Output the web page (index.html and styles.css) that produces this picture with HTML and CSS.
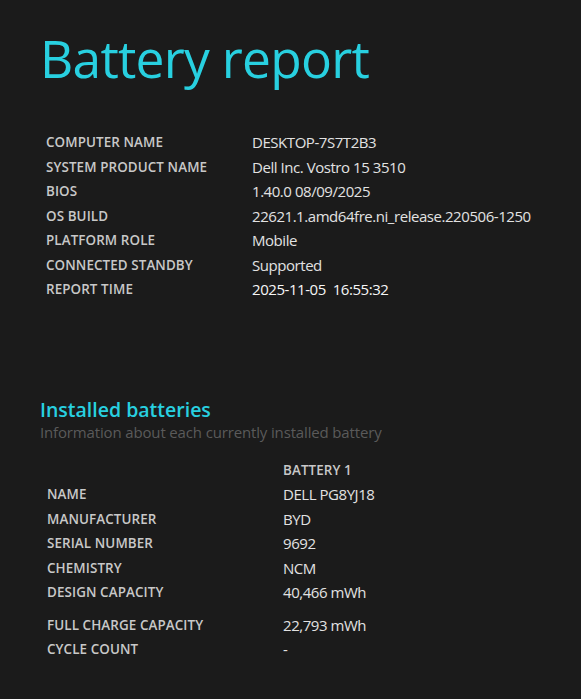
FILE: index.html
```html
<!DOCTYPE html>
<html>
<head>
<meta charset="utf-8">
<link rel="stylesheet" href="styles.css">
</head>
<body>
<div class="page">
  <h1 class="title">Battery report</h1>
  <table class="info">
    <tr><td class="label">COMPUTER NAME</td><td class="value">DESKTOP-7S7T2B3</td></tr>
    <tr><td class="label">SYSTEM PRODUCT NAME</td><td class="value">Dell Inc. Vostro 15 3510</td></tr>
    <tr><td class="label">BIOS</td><td class="value">1.40.0 08/09/2025</td></tr>
    <tr><td class="label">OS BUILD</td><td class="value">22621.1.amd64fre.ni_release.220506-1250</td></tr>
    <tr><td class="label">PLATFORM ROLE</td><td class="value">Mobile</td></tr>
    <tr><td class="label">CONNECTED STANDBY</td><td class="value">Supported</td></tr>
    <tr><td class="label">REPORT TIME</td><td class="value strong">2025-11-05&nbsp;&nbsp;16:55:32</td></tr>
  </table>

  <h2 class="section">Installed batteries</h2>
  <div class="subtitle">Information about each currently installed battery</div>

  <table class="batt">
    <tr class="head"><td class="blabel"></td><td class="label">BATTERY 1</td></tr>
    <tr><td class="label">NAME</td><td class="value">DELL PG8YJ18</td></tr>
    <tr><td class="label">MANUFACTURER</td><td class="value">BYD</td></tr>
    <tr><td class="label">SERIAL NUMBER</td><td class="value">9692</td></tr>
    <tr><td class="label">CHEMISTRY</td><td class="value">NCM</td></tr>
    <tr><td class="label">DESIGN CAPACITY</td><td class="value">40,466 mWh</td></tr>
    <tr class="spaced"><td class="label">FULL CHARGE CAPACITY</td><td class="value">22,793 mWh</td></tr>
    <tr><td class="label">CYCLE COUNT</td><td class="value">-</td></tr>
  </table>
</div>
</body>
</html>
```

FILE: styles.css
```css
html, body {
  margin: 0;
  padding: 0;
  background: #1b1b1b;
}
body {
  font-family: "Open Sans", "Noto Sans", sans-serif;
  color: #e6e6e6;
}
.page {
  padding: 23px 0 0 40px;
}
.title {
  margin: 0;
  font-weight: 400;
  font-size: 51.5px;
  line-height: 70px;
  color: #28d0e0;
  letter-spacing: -0.75px;
}
.info {
  border-collapse: collapse;
  margin: 37px 0 0 3px;
}
.info td {
  padding: 0 3px;
  height: 24.5px;
  vertical-align: middle;
  white-space: nowrap;
}
.info .label {
  width: 200px;
}
.label {
  font-size: 13.4px;
  font-weight: 600;
  color: #c8c8c8;
  letter-spacing: 0.1px;
}
.value {
  font-size: 15px;
  color: #e2e2e2;
  letter-spacing: -0.45px;
}
.strong {
  color: #f6f6f6;
  font-weight: 500;
}
.section {
  margin: 96px 0 0 0;
  font-size: 19.5px;
  font-weight: 600;
  line-height: 24px;
  color: #28d0e0;
}
.subtitle {
  font-size: 15px;
  color: #5a5a5a;
  line-height: 21px;
  letter-spacing: -0.15px;
}
.batt {
  border-collapse: collapse;
  margin: 15px 0 0 4px;
}
.batt td {
  padding: 0 3px;
  height: 24.5px;
  vertical-align: middle;
  white-space: nowrap;
}
.batt td:first-child {
  width: 230px;
}
.batt .spaced td {
  padding-top: 8px;
}
```
